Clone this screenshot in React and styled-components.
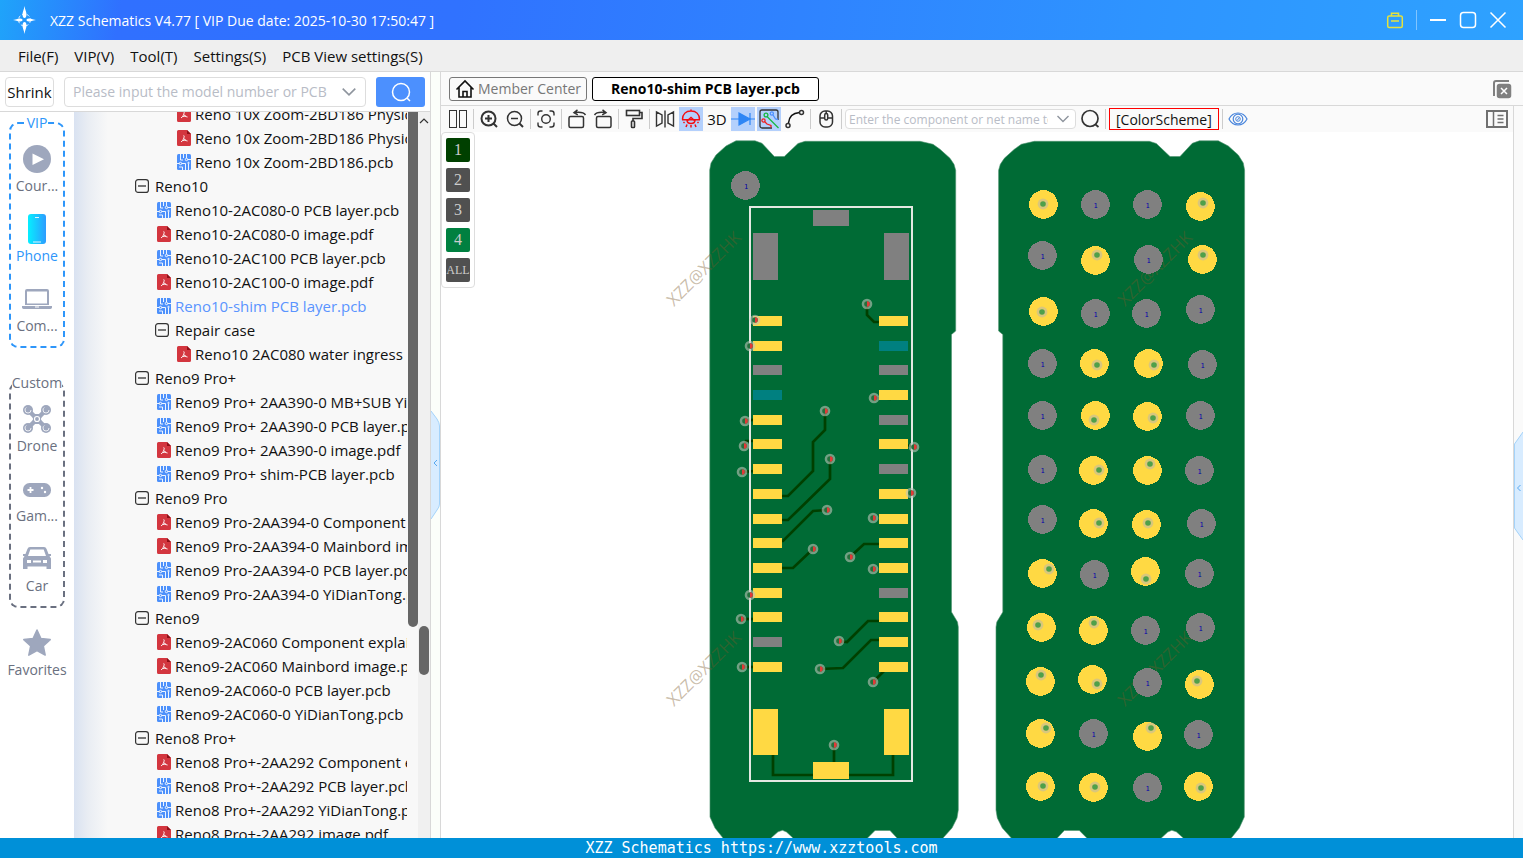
import React, { useState } from "react";
import styled, { createGlobalStyle, css } from "styled-components";

const GlobalStyle = createGlobalStyle`
  * {
    box-sizing: border-box;
  }

  body {
    margin: 0;
    overflow: hidden;
    font-family: "Open Sans", "Noto Sans", sans-serif;
    font-size: 15px;
    color: #111;
  }

  button,
  input {
    font-family: inherit;
    font-size: inherit;
    color: inherit;
  }

  button {
    padding: 0;
    border: none;
    background: none;
    cursor: pointer;
  }
`;

const Page = styled.div`
  display: flex;
  flex-direction: column;
  height: 100vh;
  background: white;
`;

// Title bar
const TitleBar = styled.header`
  display: flex;
  align-items: center;
  flex: none;
  height: 40px;
  padding: 0 16px 0 12px;
  color: white;
  background: linear-gradient(
    100deg,
    #1fa4fa 0%,
    #3070ff 8%,
    #3072ff 30%,
    #2e94ff 75%,
    #2ea2ff 100%
  );
`;

const Title = styled.h1`
  flex: 1;
  margin: 0 0 0 12px;
  font-size: 14px;
  font-weight: 400;
`;

const WindowButtons = styled.div`
  display: flex;
  align-items: center;
  gap: 12px;

  button {
    display: flex;
  }
`;

const TitleDivider = styled.span`
  width: 1px;
  height: 20px;
  background: rgba(255, 255, 255, 0.4);
`;

// Menu
const MenuBar = styled.nav`
  display: flex;
  align-items: center;
  flex: none;
  gap: 16px;
  height: 32px;
  padding: 0 18px;
  background: #efefef;
  border-bottom: 1px solid #d8d8d8;
`;

const Body = styled.div`
  display: flex;
  flex: 1;
  min-height: 0;
`;

// Left panel
const SidePanel = styled.aside`
  display: flex;
  flex-direction: column;
  flex: none;
  width: 431px;
  border-right: 1px solid #d8d8d8;
`;

const SearchRow = styled.form`
  display: flex;
  align-items: center;
  flex: none;
  height: 40px;
  padding: 0 5px;
  border-bottom: 1px solid #d8d8d8;
`;

const ShrinkButton = styled.button`
  width: 49px;
  height: 30px;
  border: 1px solid #ddd;
  border-radius: 4px;
`;

const Combo = styled.label`
  display: flex;
  align-items: center;
  background: white;
  border: 1px solid #ddd;
  border-radius: 4px;

  input {
    flex: 1;
    min-width: 0;
    padding: 0;
    border: none;
    outline: none;
    background: none;
  }

  input::placeholder {
    color: #b8bcc6;
    opacity: 1;
  }
`;

const ModelCombo = styled(Combo)`
  flex: 1;
  height: 30px;
  margin: 0 10px;
  padding: 0 8px;
  gap: 6px;
  font-size: 14px;
`;

const SearchButton = styled.button`
  display: flex;
  align-items: center;
  justify-content: center;
  width: 49px;
  height: 30px;
  border-radius: 3px;
  background: #4c90fe;
`;

const SideBody = styled.div`
  display: flex;
  flex: 1;
  min-height: 0;
`;

const CategoryNav = styled.nav`
  display: flex;
  flex-direction: column;
  align-items: center;
  flex: none;
  width: 74px;
  overflow: hidden;
`;

const CategoryGroup = styled.fieldset`
  width: 56px;
  min-width: 0;
  height: 236px;
  margin: 0 0 24px;
  padding: 0;
  border: 2px dashed ${({ $color }) => $color};
  border-radius: 9px;
  color: ${({ $color }) => $color};

  &:last-of-type {
    margin-bottom: 10px;
  }

  legend {
    margin: 0 auto;
    padding: 0;
    font-size: 14px;
    line-height: 22px;
  }
`;

const CategoryItem = styled.button`
  display: flex;
  flex-direction: column;
  align-items: center;
  width: 100%;
  height: 70px;
  color: ${({ $active }) => ($active ? "#2e96fa" : "#6a7080")};
  font-size: 14px;

  svg {
    flex: none;
    margin-top: 10px;
  }

  span {
    line-height: 24px;
  }
`;

// File tree
const Tree = styled.ul`
  flex: 1;
  min-width: 0;
  margin: 0;
  padding: 0;
  overflow: hidden;
  list-style: none;
  background: linear-gradient(90deg, #d9e2f1 0, #e9edf3 14px, #f8f8f8 34px);

  li:first-child {
    margin-top: -10px;
  }
`;

const TreeRow = styled.li`
  display: flex;
  align-items: center;
  height: 24px;
  padding-left: ${({ $level, $group }) => 61 + $level * 20 + ($group ? 0 : 2)}px;
  gap: ${({ $group }) => ($group ? 6 : 4)}px;
  white-space: nowrap;
  color: ${({ $selected }) => ($selected ? "#5a94ff" : "#111")};

  svg {
    flex: none;
  }
`;

const Track = styled.div`
  display: flex;
  flex-direction: column;
  align-items: center;
  flex: none;
  width: ${({ $width }) => $width}px;
  background: ${({ $shade }) => $shade};
`;

const Thumb = styled.div`
  flex: ${({ $grow }) => $grow || "none"};
  width: 10px;
  min-height: 49px;
  border-radius: ${({ $flatTop }) => ($flatTop ? "0 0 5px 5px" : "5px")};
  background: #666;
`;

const Spacer = styled.div`
  flex: ${({ $grow }) => $grow};
`;

const Splitter = styled.div`
  display: flex;
  align-items: center;
  flex: none;
  width: 10px;
  padding-top: ${({ $shift }) => $shift}px;
  background: #fbfefa;
  border-right: 1px solid #d8d8d8;

  button {
    display: flex;
  }
`;

const RightRail = styled(Splitter)`
  background: #fafafa;
  border-right: none;
  border-left: 1px solid #d8d8d8;
`;

// Viewer
const Viewer = styled.main`
  display: flex;
  flex-direction: column;
  flex: 1;
  min-width: 0;
`;

const TabBar = styled.div`
  display: flex;
  align-items: center;
  flex: none;
  gap: 5px;
  height: 34px;
  padding: 0 11px 0 8px;
  background: #fafafa;
  border-bottom: 1px solid #d8d8d8;
`;

const Tab = styled.button`
  display: flex;
  align-items: center;
  gap: 3px;
  height: 24px;
  padding: 0 5px;
  border: 1px solid #777;
  border-radius: 3px;
  color: #777;
  font-size: 14px;

  ${({ $active }) =>
    $active &&
    css`
      padding: 0 18px;
      border-color: #000;
      background: white;
      color: #000;
      font-weight: 700;
    `}
`;

const CloseAll = styled.button`
  display: flex;
  margin-left: auto;
`;

const ViewerBody = styled.div`
  display: flex;
  flex: 1;
  min-height: 0;
`;

const Stage = styled.div`
  display: flex;
  flex-direction: column;
  flex: 1;
  min-width: 0;
`;

const Toolbar = styled.div`
  display: flex;
  align-items: center;
  flex: none;
  gap: 2px;
  height: 26px;
  padding: 0 5px;
  background: #fafafa;
`;

const Tool = styled.button`
  display: flex;
  align-items: center;
  justify-content: center;
  flex: none;
  width: 24px;
  height: 24px;
  background: ${({ $on }) => ($on ? "#b4d0fc" : "none")};
`;

const ToolDivider = styled.span`
  flex: none;
  width: 1px;
  height: 20px;
  margin: 0 1px;
  background: #ccc;
`;

const NetCombo = styled(Combo)`
  flex: none;
  width: 231px;
  height: 20px;
  padding: 0 5px 0 3px;
  gap: 8px;
  font-size: 12px;
`;

const SchemeButton = styled.button`
  flex: none;
  height: 22px;
  padding: 0 6px;
  border: 1px solid #f00;
  font-size: 14px;
`;

const PanelToggle = styled.button`
  display: flex;
  margin-left: auto;
`;

const Canvas = styled.div`
  position: relative;
  flex: 1;
  min-height: 0;
  background: white;

  > svg {
    display: block;
    width: 100%;
    height: 100%;
  }
`;

// floats over the board
const LayerPanel = styled.div`
  position: absolute;
  top: 0;
  left: 0;
  display: flex;
  flex-direction: column;
  gap: 6px;
  padding: 5px 4px;
  background: white;
  border: 1px solid #ddd;
  border-radius: 4px;
`;

const LayerButton = styled.button`
  width: 24px;
  height: 24px;
  border-radius: 2px;
  background: ${({ $color }) => $color};
  color: #ccc;
  font-family: "Liberation Serif", serif;
  font-size: ${({ $small }) => ($small ? 12 : 16)}px;
  line-height: 24px;
`;

const Footer = styled.footer`
  flex: none;
  height: 20px;
  background: #0090d8;
  color: white;
  font-family: "DejaVu Sans Mono", monospace;
  font-size: 15px;
  line-height: 20px;
  text-align: center;
`;

/* ---------- icons ---------- */

const Icon = ({ size = 20, width, height, children, ...rest }) => (
  <svg
    width={width || size}
    height={height || size}
    viewBox={`0 0 ${width || size} ${height || size}`}
    fill="none"
    stroke="#333"
    strokeWidth="1.5"
    aria-hidden="true"
    {...rest}
  >
    {children}
  </svg>
);

const Logo = () => (
  <Icon width={26} height={30} stroke="none">
    <circle cx="12.5" cy="15" r="6" stroke="#d8ecff" strokeWidth="1" strokeDasharray="3 2" />
    <path
      fill="#fff"
      d="M12.5 1c.6 4 2 6 2 8.500s-1 3.500-2 3.500-2-1-2-3.500S11.900 5 12.500 1zM12.500 29c.6-4 2-6 2-8.500s-1-3.500-2-3.500-2 1-2 3.500 1.400 4.500 2 8.500z"
    />
    <path
      fill="#fff"
      d="M1 15c4-.5 5-1.500 7-1.500s2.500.8 2.500 1.500-.5 1.500-2.500 1.500S5 15.500 1 15zM24 15c-4-.5-5-1.500-7-1.500s-2.500.8-2.500 1.500.5 1.500 2.500 1.500 3-1 7-1.500z"
    />
  </Icon>
);

const Chevron = ({ size = 14 }) => (
  <svg width={size} height={size} viewBox="0 0 14 14" fill="none" stroke="#8f959e" strokeWidth="1.4">
    <path d="M1.500 4L7 9.500 12.500 4" />
  </svg>
);

const BoxMinus = () => (
  <Icon size={14} strokeWidth="1.200">
    <rect x="0.600" y="0.600" width="12.800" height="12.800" rx="2.500" />
    <path d="M3 7h8" stroke="#222" />
  </Icon>
);

const PdfIcon = () => (
  <Icon width={14} height={16} stroke="none">
    <path fill="#d3363f" d="M1.500 0H10l4 4v10.500a1.500 1.500 0 0 1-1.500 1.500h-11A1.500 1.500 0 0 1 0 14.500v-13A1.500 1.500 0 0 1 1.500 0z" />
    <path fill="#8f1018" d="M10 0l4 4h-4z" />
    <path d="M6.600 5.500c1 0 .5 1.700.1 2.800-.6 1.500-1.400 3-2.700 3.600M7 8.500c.6 1.200 1.500 2.100 3.500 2.500M5.500 10.700c1-.5 2-.7 3.500-.5" stroke="#fff" strokeWidth="1" />
  </Icon>
);

const PcbIcon = () => (
  <Icon width={14} height={16} stroke="none">
    <rect width="14" height="16" rx="1.500" fill="#4c90fb" />
    <g stroke="#fff" strokeWidth="0.900">
      <path d="M3.500 0v6h2.500M6.500 0v4M9.500 0v4M10.700 5.500H14M0 9.500h2.300M4.700 9.500h3.800V16M11.500 16v-6M5.500 16v-3H2" />
      <circle cx="9.500" cy="5.500" r="1.200" />
      <circle cx="3.500" cy="9.500" r="1.200" />
      <circle cx="11.500" cy="9" r="0.700" />
    </g>
  </Icon>
);

const SlateIcon = (props) => <Icon size={30} height={30} stroke="none" fill="#9ea7bd" {...props} />;

const CourseIcon = () => (
  <SlateIcon>
    <circle cx="15" cy="15" r="14" />
    <path d="M10.500 9.500v11.500L22 15.200z" fill="#fff" />
  </SlateIcon>
);

const PhoneIcon = () => (
  <Icon size={30} stroke="none">
    <defs>
      <linearGradient id="phone" x1="0" x2="1">
        <stop offset="0" stopColor="#06efff" />
        <stop offset="1" stopColor="#2d9cff" />
      </linearGradient>
    </defs>
    <rect x="6" y="0" width="18" height="30" rx="3" fill="url(#phone)" />
    <path d="M13 3.500h4M11 28h8" stroke="#dff6ff" strokeWidth="1.200" />
  </Icon>
);

const LaptopIcon = () => (
  <SlateIcon>
    <path fillRule="evenodd" d="M5 5h20a2 2 0 0 1 2 2v14H3V7a2 2 0 0 1 2-2zm0 2.500v12h20v-12z" />
    <path d="M0 22h30v1.500a2 2 0 0 1-2 1.500H2a2 2 0 0 1-2-1.500z" />
    <path d="M13 23h4" stroke="#fff" strokeWidth="1" />
  </SlateIcon>
);

const DroneIcon = () => (
  <SlateIcon>
    <path d="M6 6l18 18M24 6L6 24" stroke="#9ea7bd" strokeWidth="4.500" />
    <path d="M10 10h10l-1 5 1 5H10l1-5z" />
    {[
      [6, 6],
      [24, 6],
      [6, 24],
      [24, 24],
    ].map(([x, y]) => (
      <g key={`${x}-${y}`}>
        <circle cx={x} cy={y} r="5" />
        <circle cx={x} cy={y} r="3" fill="none" stroke="#fff" strokeWidth="0.800" strokeDasharray="12 7" />
      </g>
    ))}
    <circle cx="15" cy="15" r="2.500" stroke="#fff" strokeWidth="1.200" />
  </SlateIcon>
);

const GameIcon = () => (
  <SlateIcon>
    <rect x="1" y="9" width="28" height="14" rx="6.500" />
    <path d="M5.500 16h6M8.500 13v6" stroke="#fff" strokeWidth="1.800" />
    <circle cx="20" cy="14" r="1.200" fill="#fff" />
    <circle cx="23" cy="18" r="1.200" fill="#fff" />
  </SlateIcon>
);

const CarIcon = () => (
  <SlateIcon>
    <path
      fillRule="evenodd"
      d="M8 3h14a3 3 0 0 1 2.600 2l1.900 5H29v2h-1.500l1.500 2.500V25h-4.500v-2.500h-19V25H1v-10.500L2.500 12H1v-2h2.500l1.900-5A3 3 0 0 1 8 3zm.3 2.500L6 12h18l-2.300-6.500zM5 16v3h4v-3zm16 0v3h4v-3zm-10 .5v2h8v-2z"
    />
  </SlateIcon>
);

const StarIcon = () => (
  <SlateIcon>
    <path
      d="M15 2l3.900 8.500 9.300 1.100-6.900 6.300 1.900 9.200-8.200-4.500-8.200 4.500 1.900-9.200-6.900-6.300 9.300-1.100z"
      stroke="#9ea7bd"
      strokeLinejoin="round"
      strokeWidth="1.500"
    />
  </SlateIcon>
);

const Lens = ({ sign }) => (
  <Icon size={20}>
    <circle cx="9.500" cy="9.500" r="7" strokeWidth={sign === "+" ? 2 : 1.500} />
    <path d="M14.500 14.500L18 18" strokeWidth="2" />
    {sign && <path d="M6 9.500h7" strokeWidth={sign === "+" ? 2 : 1.500} />}
    {sign === "+" && <path d="M9.500 6v7" strokeWidth="2" />}
  </Icon>
);

const FindIcon = () => (
  <Icon size={20} strokeWidth="1.700">
    <circle cx="10" cy="9.500" r="8" />
    <path d="M15.500 15.500l3 2.500" />
  </Icon>
);

const ColumnsIcon = () => (
  <Icon size={20} strokeWidth="1">
    <rect x="1.500" y="1.500" width="7" height="17" />
    <rect x="11.500" y="1.500" width="7" height="17" />
  </Icon>
);

const FocusIcon = () => (
  <Icon size={20} strokeWidth="1.400">
    <circle cx="10" cy="10" r="4.300" />
    <path d="M2 6.500V4.500A2.500 2.500 0 0 1 4.500 2h2M13.500 2h2A2.500 2.500 0 0 1 18 4.500v2M18 13.500v2a2.500 2.500 0 0 1-2.500 2.500h-2M6.500 18h-2A2.500 2.500 0 0 1 2 15.500v-2" />
  </Icon>
);

const RotateLeftIcon = () => (
  <Icon size={20}>
    <rect x="2" y="7.500" width="14.500" height="11" rx="1.500" />
    <path d="M18.500 6C17 3.500 13 2.800 7.500 3.500M10.500.8L7 3.600l3.800 2.200" />
  </Icon>
);

const RotateRightIcon = () => (
  <Icon size={20}>
    <rect x="3.500" y="7.500" width="14.500" height="11" rx="1.500" />
    <path d="M1.500 6C3 3.500 7 2.800 12.500 3.500M9.500.8L13 3.600 9.200 5.800" />
  </Icon>
);

const RollerIcon = () => (
  <Icon size={20} strokeWidth="1.600">
    <rect x="2.500" y="1.500" width="13" height="5" />
    <path d="M15.500 3.500h2.500v6H9v2.500" />
    <rect x="7.500" y="12" width="3" height="6.500" rx="0.800" />
  </Icon>
);

const MirrorIcon = () => (
  <Icon size={20} strokeWidth="1.400">
    <path d="M1.500 3v14l5.500-3V6zM18.500 3v14L13 14V6zM10 1.500v17" />
  </Icon>
);

const LampIcon = () => (
  <Icon size={20} stroke="#f40d12">
    <path d="M1.500 10.500C1.500 5 5 2 10 2s8.500 3 8.500 8.500M10 2V.5M1 10.700h18" />
    <path d="M6 11c0 2 1.500 3.500 4 3.500s4-1.500 4-3.500M6.500 11.500L10 8.500l3.500 3" />
    <path d="M3.500 13L2.500 14M6 15.500L5 18M10 16v2.500M14 15.500l1 2.500M16.500 13l1 1" />
  </Icon>
);

const DiodeIcon = () => (
  <Icon size={24} stroke="#2f86f5" strokeWidth="1.200">
    <path d="M0 12h24M19 6v12" />
    <path d="M8 6l11 6-11 6z" fill="#2f86f5" />
  </Icon>
);

const RouteIcon = () => (
  <Icon size={20} strokeWidth="1.300">
    <path d="M13 19H3a2 2 0 0 1-2-2V3a2 2 0 0 1 2-2h14a2 2 0 0 1 2 2v8" />
    <path d="M8 7.500L19.500 19" stroke="#18b840" />
    <circle cx="7" cy="6" r="1.900" stroke="#18b840" />
    <path d="M14 6l2.500 4 2.500.5" stroke="#4c90ff" />
    <circle cx="12.800" cy="4.500" r="1.600" stroke="#4c90ff" />
    <path d="M5.500 12.500L8 15l4 1.500v2" stroke="#f02020" />
    <circle cx="4.500" cy="11.500" r="1.600" stroke="#f02020" />
  </Icon>
);

const CurveIcon = () => (
  <Icon size={20}>
    <path d="M3.500 14C4 8 8 4 14.500 3.500" stroke="#111" />
    <circle cx="16.500" cy="3.500" r="2" />
    <circle cx="3" cy="16.500" r="2" />
  </Icon>
);

const MouseIcon = () => (
  <Icon size={20}>
    <rect x="4" y="2" width="12.500" height="16" rx="5" />
    <path d="M4 9h12.500M10.200 2v3" />
    <rect x="8.700" y="4.500" width="3" height="6.500" rx="1.500" fill="#fafafa" />
  </Icon>
);

const EyeIcon = () => (
  <Icon size={20} stroke="#4a86dc" strokeWidth="1.200">
    <path d="M1 10c4-8 14-8 18 0-4 8-14 8-18 0z" />
    <circle cx="10" cy="10" r="4.800" />
    <circle cx="10" cy="10" r="2.300" strokeWidth="1" />
    <path d="M9 11.500l2.500-3" strokeWidth="1" />
  </Icon>
);

const PanelIcon = () => (
  <Icon width={22} height={20} stroke="#707070">
    <rect x="1" y="2" width="20" height="16" strokeWidth="2" />
    <path d="M7.500 2v16M11.500 6.500h6M11.500 10h6M11.500 13.500h6" />
  </Icon>
);

const CloseAllIcon = () => (
  <Icon size={20} stroke="#808080">
    <path d="M2 17V4a2 2 0 0 1 2-2h13" strokeWidth="2" />
    <rect x="5.500" y="5.500" width="13" height="13" rx="2" fill="#808080" />
    <path d="M9 9l6 6M15 9l-6 6" stroke="#fff" />
  </Icon>
);

const HomeIcon = () => (
  <Icon size={20} stroke="#111" strokeWidth="1.600">
    <path d="M1.500 10.500L10 2l8.500 8.500M4 8.500V18h12V8.500M8 18v-5.500h4V18" />
  </Icon>
);

/* ---------- board data ---------- */

const OUTLINE =
  "M709.700 170l1.300-7 5-8 10-9 10-5.200H755l7 2.500L774.300 156.500h10L798 143.500l7-2.200H920l13 3 7 5 10 9 4 6 1.700 6V331l-4.200 3.500V612l6 10 .8 5V810l-1.300 8-5 10L943 838v4H897v-4l-7-7.500H875l-7.500 7.500v4H793v-4l-6.500-6-4-1.700-4.500 1.500-7 6.200v4H723v-4l-8-10-5-11z";

const PAD_ROWS = [316, 341, 365, 390, 415, 439, 464, 489, 514, 538, 563, 588, 612, 637, 662];
const LEFT_PADS = "yygtyyyyyyyyygy";
const RIGHT_PADS = "ytgygygyyyygyyy";
const PAD_COLORS = { y: "#ffd943", g: "#808080", t: "#008080" };

const BIG_PADS = [
  [813, 210, 36, 16, "g"],
  [753, 233, 25, 47, "g"],
  [884, 233, 25, 47, "g"],
  [753, 709, 25, 46, "y"],
  [884, 709, 25, 46, "y"],
  [813, 762, 36, 17, "y"],
];

const TRACES = [
  "867,304 867,315 874,322 882,322",
  "825,411 825,430 813,442 813,471 788,496 780,496",
  "830,459 830,479 788,520 780,520",
  "827,510 813,511 783,541 779,541",
  "813,549 793,568 780,568",
  "850,557 864,544 882,544",
  "839,641 847,642 868,621 882,621",
  "820,669 843,668 871,640 882,640",
  "873,682 886,669",
  "773,754 773,775 893,775 893,754",
  "834,745 834,765",
  "745,420 755,420",
  "744,446 746,441 755,441",
  "742,472 755,471",
  "741,619 755,619",
  "742,667 755,667",
  "874,398 891,399",
  "906,445 914,447",
];

const VIAS = [
  [755, 320], [750, 346], [745, 421], [744, 446], [742, 472], [825, 411],
  [830, 459], [827, 510], [813, 549], [867, 304], [874, 398], [914, 447],
  [911, 493], [873, 518], [850, 557], [873, 569], [750, 595], [741, 619],
  [742, 667], [839, 641], [820, 669], [873, 682], [834, 745],
];

// x, y and, for a gold pad, the via on it
const ROUND_PADS = [
  [1043.5, 204.5, 1043, 204], [1095.5, 204.5], [1147.5, 204.5], [1200.5, 206.5, 1203, 203],
  [1042.5, 255.5], [1095.5, 260.5, 1097, 255], [1148.5, 259.5], [1202.5, 259.5, 1203, 255],
  [1043.5, 311.5, 1042, 312], [1095.5, 313.5], [1146.5, 313.5], [1200.5, 309.5],
  [1042.5, 363.5], [1094.5, 363.5, 1097, 365], [1148.5, 363.5, 1154, 365], [1202.5, 364.5],
  [1042.5, 415.5], [1095.5, 415.5, 1094, 420], [1147.5, 416.5, 1153, 418], [1200.5, 415.5],
  [1042.5, 469.5], [1093.5, 470.5, 1099, 470], [1147.5, 470.5, 1150, 464], [1199.5, 470.5],
  [1042.5, 519.5], [1093.5, 523.5, 1099, 523], [1146.5, 524.5, 1148, 523], [1201.5, 523.5],
  [1042.5, 573.5, 1049, 569], [1094.5, 574.5], [1145.5, 571.5, 1146, 579], [1199.5, 573.5],
  [1041.5, 627.5, 1038, 625], [1093.5, 630.5, 1094, 623], [1145.5, 630.5], [1200.5, 627.5],
  [1040.5, 681.5, 1041, 675], [1092.5, 679.5, 1097, 684], [1147.5, 682.5], [1199.5, 684.5, 1197, 681],
  [1040.5, 733.5, 1046, 728], [1093.5, 733.5], [1147.5, 736.5, 1151, 728], [1198.5, 734.5],
  [1040.5, 786.5, 1043, 786], [1093.5, 787.5, 1095, 787], [1147.5, 787.5], [1198.5, 786.5, 1201, 788],
];

const WATERMARKS = [
  [674, 307],
  [674, 707],
  [1125, 307],
  [1125, 707],
];

const PadNumber = ({ x, y }) => (
  <text x={x} y={y + 3} fill="#0000a8" fontSize="7" textAnchor="middle" fontFamily="DejaVu Sans Mono, monospace">
    1
  </text>
);

const RoundPad = ({ pad: [x, y, vx, vy] }) => (
  <g>
    <circle cx={x} cy={y} r="14.300" fill={vx ? PAD_COLORS.y : PAD_COLORS.g} shapeRendering="crispEdges" />
    {vx ? (
      <>
        <circle cx={vx} cy={vy} r="5.400" fill="#d9c77c" />
        <circle cx={vx} cy={vy} r="2.800" fill="#4fa04a" />
      </>
    ) : (
      <PadNumber x={x} y={y} />
    )}
  </g>
);

const Board = () => (
  <svg viewBox="441 132 1072 706" role="img" aria-label="Reno10-shim PCB layer">
    <g fill="#006b35" stroke="#4f9470" strokeWidth="0.600">
      <path d={OUTLINE} />
      <path d={OUTLINE} transform="translate(1954.300) scale(-1 1)" />
    </g>

    {WATERMARKS.map(([x, y]) => (
      <text
        key={`${x}-${y}`}
        transform={`translate(${x} ${y}) rotate(-45)`}
        fontFamily="Open Sans, sans-serif"
        fontSize="17"
        fill="rgba(120, 88, 40, 0.4)"
      >
        XZZ@XZZHK
      </text>
    ))}

    <g fill="none" stroke="#004000" strokeWidth="2.700">
      {TRACES.map((points) => (
        <polyline key={points} points={points} />
      ))}
    </g>

    <g shapeRendering="crispEdges">
      {PAD_ROWS.map((y, i) => (
        <React.Fragment key={y}>
          <rect x="753" y={y} width="29" height="10" fill={PAD_COLORS[LEFT_PADS[i]]} />
          <rect x="879" y={y} width="29" height="10" fill={PAD_COLORS[RIGHT_PADS[i]]} />
        </React.Fragment>
      ))}
      {BIG_PADS.map(([x, y, w, h, color]) => (
        <rect key={`${x}-${y}`} x={x} y={y} width={w} height={h} fill={PAD_COLORS[color]} />
      ))}
      <rect x="750" y="207" width="162" height="574" fill="none" stroke="#e4e8e2" strokeWidth="2" />
      <circle cx="745.500" cy="185.500" r="14.300" fill={PAD_COLORS.g} />
    </g>
    <PadNumber x={746} y={186} />

    {VIAS.map(([x, y]) => (
      <g key={`${x}-${y}`}>
        <circle cx={x} cy={y} r="5.300" fill="rgba(190, 195, 185, 0.6)" />
        <circle cx={x} cy={y} r="2.800" fill="#24703c" />
        <path d={`M${x} ${y - 2.8}a2.800 2.800 0 0 1 0 5.600z`} fill="#e23a38" />
      </g>
    ))}

    {ROUND_PADS.map((pad) => (
      <RoundPad key={pad.join()} pad={pad} />
    ))}
  </svg>
);

/* ---------- page data ---------- */

const MENUS = ["File(F)", "VIP(V)", "Tool(T)", "Settings(S)", "PCB View settings(S)"];

const CATEGORY_GROUPS = [
  {
    title: "VIP",
    color: "#2e96fa",
    items: [
      ["Cour...", CourseIcon],
      ["Phone", PhoneIcon],
      ["Com...", LaptopIcon],
    ],
  },
  {
    title: "Custom",
    color: "#6a7080",
    items: [
      ["Drone", DroneIcon],
      ["Gam...", GameIcon],
      ["Car", CarIcon],
    ],
  },
];

// [level, name], a name without an extension is a folder
const FILES = [
  [2, "Reno 10x Zoom-2BD186 Physical image.pdf"],
  [2, "Reno 10x Zoom-2BD186 Physical point.pdf"],
  [2, "Reno 10x Zoom-2BD186.pcb"],
  [0, "Reno10"],
  [1, "Reno10-2AC080-0 PCB layer.pcb"],
  [1, "Reno10-2AC080-0 image.pdf"],
  [1, "Reno10-2AC100 PCB layer.pcb"],
  [1, "Reno10-2AC100-0 image.pdf"],
  [1, "Reno10-shim PCB layer.pcb"],
  [1, "Repair case"],
  [2, "Reno10 2AC080 water ingress right.pdf"],
  [0, "Reno9 Pro+"],
  [1, "Reno9 Pro+ 2AA390-0 MB+SUB YiDianTong.pcb"],
  [1, "Reno9 Pro+ 2AA390-0 PCB layer.pcb"],
  [1, "Reno9 Pro+ 2AA390-0 image.pdf"],
  [1, "Reno9 Pro+ shim-PCB layer.pcb"],
  [0, "Reno9 Pro"],
  [1, "Reno9 Pro-2AA394-0 Component explain.pdf"],
  [1, "Reno9 Pro-2AA394-0 Mainbord image.pdf"],
  [1, "Reno9 Pro-2AA394-0 PCB layer.pcb"],
  [1, "Reno9 Pro-2AA394-0 YiDianTong.pcb"],
  [0, "Reno9"],
  [1, "Reno9-2AC060 Component explain.pdf"],
  [1, "Reno9-2AC060 Mainbord image.pdf"],
  [1, "Reno9-2AC060-0 PCB layer.pcb"],
  [1, "Reno9-2AC060-0 YiDianTong.pcb"],
  [0, "Reno8 Pro+"],
  [1, "Reno8 Pro+-2AA292 Component explain.pdf"],
  [1, "Reno8 Pro+-2AA292 PCB layer.pcb"],
  [1, "Reno8 Pro+-2AA292 YiDianTong.pcb"],
  [1, "Reno8 Pro+-2AA292 image.pdf"],
];

const LAYERS = [
  ["1", "#004000"],
  ["2", "#505050"],
  ["3", "#505050"],
  ["4", "#008040"],
  ["ALL", "#505050"],
];

// null is a divider
const TOOLS = [
  ["Split view", <ColumnsIcon />],
  null,
  ["Zoom in", <Lens sign="+" />],
  ["Zoom out", <Lens sign="-" />],
  null,
  ["Fit", <FocusIcon />],
  null,
  ["Rotate left", <RotateLeftIcon />],
  ["Rotate right", <RotateRightIcon />],
  null,
  ["Paint", <RollerIcon />],
  null,
  ["Mirror", <MirrorIcon />],
  ["Lamp", <LampIcon />, true],
  ["3D", "3D"],
  ["Diode", <DiodeIcon />, true],
  ["Routes", <RouteIcon />, true],
  ["Curve", <CurveIcon />],
  null,
  ["Mouse", <MouseIcon />],
  null,
];

const fileIcon = (name) => {
  if (name.endsWith(".pdf")) return <PdfIcon />;
  if (name.endsWith(".pcb")) return <PcbIcon />;
  return <BoxMinus />;
};

const App = () => {
  const [selected, setSelected] = useState("Reno10-shim PCB layer.pcb");

  return (
    <Page>
      <GlobalStyle />

      {/* Title bar */}
      <TitleBar>
        <Logo />
        <Title>XZZ Schematics V4.77 [ VIP Due date: 2025-10-30 17:50:47 ]</Title>
        <WindowButtons>
          <button aria-label="Toolbox">
            <Icon size={18} stroke="#e6e23c">
              <rect x="1.700" y="5" width="14.600" height="11.500" rx="1.500" />
              <path d="M5.500 5V2.200h7V5M5 10h8" />
            </Icon>
          </button>
          <TitleDivider />
          <button aria-label="Minimize">
            <Icon size={18} stroke="#fff" strokeWidth="2">
              <path d="M1 9h16" />
            </Icon>
          </button>
          <button aria-label="Maximize">
            <Icon size={18} stroke="#fff">
              <rect x="1.500" y="1.500" width="15" height="15" rx="3" />
            </Icon>
          </button>
          <button aria-label="Close">
            <Icon size={18} stroke="#fff">
              <path d="M1.500 1.500l15 15M16.500 1.500l-15 15" />
            </Icon>
          </button>
        </WindowButtons>
      </TitleBar>

      <MenuBar>
        {MENUS.map((menu) => (
          <button key={menu}>{menu}</button>
        ))}
      </MenuBar>

      <Body>
        {/* Left panel */}
        <SidePanel>
          <SearchRow onSubmit={(e) => e.preventDefault()}>
            <ShrinkButton type="button">Shrink</ShrinkButton>
            <ModelCombo>
              <input aria-label="Model number or PCB" placeholder="Please input the model number or PCB" />
              <Chevron size={16} />
            </ModelCombo>
            <SearchButton aria-label="Search">
              <Icon size={20} stroke="#fff">
                <circle cx="10" cy="10" r="8.500" />
                <path d="M16 16l3 3" />
              </Icon>
            </SearchButton>
          </SearchRow>

          <SideBody>
            <CategoryNav>
              {CATEGORY_GROUPS.map((group) => (
                <CategoryGroup key={group.title} $color={group.color}>
                  <legend>{group.title}</legend>
                  {group.items.map(([label, Glyph]) => (
                    <CategoryItem key={label} $active={label === "Phone"}>
                      <Glyph />
                      <span>{label}</span>
                    </CategoryItem>
                  ))}
                </CategoryGroup>
              ))}
              <CategoryItem>
                <StarIcon />
                <span>Favorites</span>
              </CategoryItem>
            </CategoryNav>

            <Tree>
              {FILES.map(([level, name]) => (
                <TreeRow
                  key={name}
                  $level={level}
                  $group={!/\.(pdf|pcb)$/.test(name)}
                  $selected={name === selected}
                  onClick={() => setSelected(name)}
                >
                  {fileIcon(name)}
                  {name}
                </TreeRow>
              ))}
            </Tree>
            <Track $width={11} $shade="#f8f8f8">
              <Thumb $grow={515} $flatTop />
              <Spacer $grow={211} />
            </Track>
            <Track $width={12} $shade="#f0f0f0">
              <Icon width={10} height={18} strokeWidth="1.200">
                <path d="M1 11l4-4 4 4" />
              </Icon>
              <Spacer $grow={496} />
              <Thumb />
              <Spacer $grow={163} />
            </Track>
          </SideBody>
        </SidePanel>

        <Splitter $shift={20}>
          <button aria-label="Collapse left panel">
            <Icon width={9} height={110} stroke="#a4d3fa" strokeWidth="1">
              <path d="M0 1l6 8q2.500 4 2.500 7v78q0 3-2.500 6l-6 9" fill="#d8ecff" />
              <path d="M6 50l-3 3 3 3" stroke="#58a8f0" />
            </Icon>
          </button>
        </Splitter>

        {/* Viewer */}
        <Viewer>
          <TabBar>
            <Tab>
              <HomeIcon />
              Member Center
            </Tab>
            <Tab $active>Reno10-shim PCB layer.pcb</Tab>
            <CloseAll aria-label="Close all tabs">
              <CloseAllIcon />
            </CloseAll>
          </TabBar>

          <ViewerBody>
            <Stage>
              <Toolbar>
                {TOOLS.map((tool, i) =>
                  tool ? (
                    <Tool key={tool[0]} aria-label={tool[0]} $on={tool[2]}>
                      {tool[1]}
                    </Tool>
                  ) : (
                    <ToolDivider key={i} />
                  )
                )}
                <NetCombo>
                  <input aria-label="Component or net name" placeholder="Enter the component or net name to search" />
                  <Chevron />
                </NetCombo>
                <Tool aria-label="Find">
                  <FindIcon />
                </Tool>
                <ToolDivider />
                <SchemeButton>[ColorScheme]</SchemeButton>
                <ToolDivider />
                <Tool aria-label="Visibility">
                  <EyeIcon />
                </Tool>
                <PanelToggle aria-label="Toggle panel">
                  <PanelIcon />
                </PanelToggle>
              </Toolbar>

              <Canvas>
                <Board />
                <LayerPanel>
                  {LAYERS.map(([name, color]) => (
                    <LayerButton key={name} $color={color} $small={name.length > 1}>
                      {name}
                    </LayerButton>
                  ))}
                </LayerPanel>
              </Canvas>
            </Stage>

            <RightRail $shift={28}>
              <button aria-label="Expand right panel">
                <Icon width={9} height={110} stroke="#a4d3fa" strokeWidth="1">
                  <path d="M9 1L.5 13v84l8.500 12" fill="#d8ecff" />
                  <path d="M6.500 54l-3 3 3 3" stroke="#58a8f0" />
                </Icon>
              </button>
            </RightRail>
          </ViewerBody>
        </Viewer>
      </Body>

      <Footer>XZZ Schematics https://www.xzztools.com</Footer>
    </Page>
  );
};

export default App;
